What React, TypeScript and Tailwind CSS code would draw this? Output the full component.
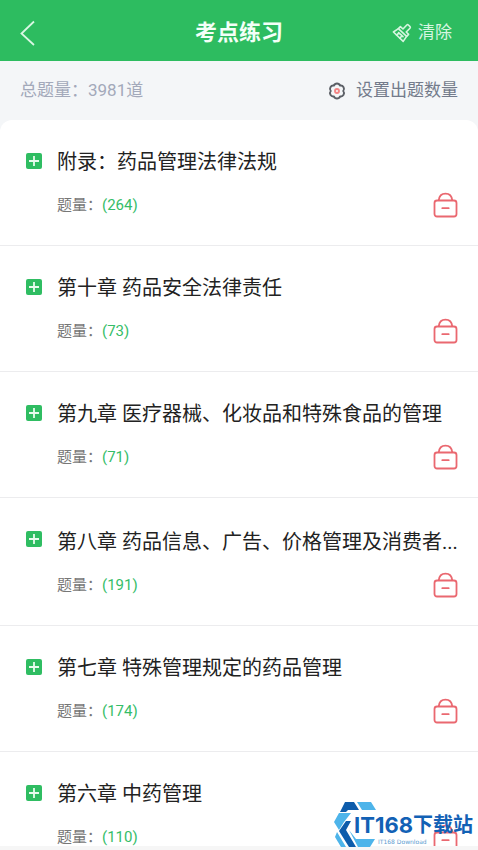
type Chapter = { title: string; count: number };

const chapters: Chapter[] = [
  { title: "附录：药品管理法律法规", count: 264 },
  { title: "第十章 药品安全法律责任", count: 73 },
  { title: "第九章 医疗器械、化妆品和特殊食品的管理", count: 71 },
  { title: "第八章 药品信息、广告、价格管理及消费者...", count: 191 },
  { title: "第七章 特殊管理规定的药品管理", count: 174 },
  { title: "第六章 中药管理", count: 110 },
];

function BackIcon() {
  return (
    <svg width="16" height="26" viewBox="0 0 16 26" fill="none" stroke="#d9f7e3" strokeWidth="1.8">
      <path d="M14 1.5 1.5 13.5 14 25" />
    </svg>
  );
}

function BrushIcon() {
  return (
    <svg width="20" height="20" viewBox="0 0 20 20" fill="none" stroke="#d6f5e0" strokeWidth="1.6" strokeLinejoin="round" strokeLinecap="round">
      <path d="M8.4 3.6 11 6 14.8 2Q15.6 1.3 16.4 2L18 3.6Q18.7 4.4 18 5.2L14.2 9 16.6 11.4 14.6 13.4 6.4 5.6Z" />
      <path d="M6.4 5.6 1.4 9 11.2 18.4 14.6 13.4" />
      <path d="M4.6 12 7 9.8M7.8 15.2 10 12.8M6.6 9.6 11 13.6" />
    </svg>
  );
}

function GearIcon() {
  return (
    <svg width="18" height="18" viewBox="0 0 18 18" fill="none" strokeWidth="1.9" strokeLinejoin="round">
      <path
        stroke="#5b5f66"
        d="M12.1 3.6A3.3 3.3 0 0 1 15.2 9A3.3 3.3 0 0 1 12.1 14.4A3.3 3.3 0 0 1 5.9 14.4A3.3 3.3 0 0 1 2.8 9A3.3 3.3 0 0 1 5.9 3.6A3.3 3.3 0 0 1 12.1 3.6Z"
      />
      <circle cx="9" cy="9" r="2" stroke="#f28585" />
    </svg>
  );
}

function PlusIcon() {
  return (
    <svg width="16" height="16" viewBox="0 0 16 16" fill="none">
      <rect width="16" height="16" rx="2" fill="#2fbd62" />
      <path d="M8 3v10M3 8h10" stroke="#e9fbef" strokeWidth="1.8" />
    </svg>
  );
}

function LockIcon() {
  return (
    <svg width="25" height="26" viewBox="0 0 25 26" fill="none" stroke="#ea6870" strokeWidth="1.8" strokeLinecap="round">
      <rect x="1.5" y="8.5" width="22" height="16" rx="2.5" />
      <path d="M5.8 8.2C6.2 4 9 1.6 12.5 1.6S18.8 4 19.2 8.2M9.3 16.2h6.4" />
    </svg>
  );
}

function ChapterRow({ title, count }: Chapter) {
  // shortened titles sit slightly lower in their row
  const short = title.endsWith("...");
  return (
    <li className={`flex border-b border-[#ececee] pb-6 pl-[26px] pr-5 ${short ? "pt-[29px]" : "pt-[27px]"}`}>
      <button type="button" aria-label="展开" className={`h-4 w-4 shrink-0 ${short ? "mt-1" : "mt-[6px]"}`}>
        <PlusIcon />
      </button>
      <div className="ml-[15px] min-w-0 flex-1">
        <h2 className="whitespace-nowrap text-[20px] leading-[30px] text-[#222222]">{title}</h2>
        <div className="mt-3 flex h-8 items-center justify-between">
          <p className="text-[15px] leading-[20px] text-[#777777]">
            题量：<span className="text-[#35bd68]">({count})</span>
          </p>
          <button type="button" aria-label="解锁">
            <LockIcon />
          </button>
        </div>
      </div>
    </li>
  );
}

function Watermark() {
  return (
    <div className="pointer-events-none absolute bottom-[2px] right-[5px] flex items-end">
      <svg width="48" height="46" viewBox="0 0 48 46" className="-mr-7">
        <path d="M11 0H20L25 8H14L12 10H6Z" fill="#0d5cab" />
        <path d="M23 0H37L42 8H28Z" fill="#4db4ea" />
        <path d="M5 11H17L10 20 5 28 0 20Z" fill="#4db4ea" />
        <path d="M12 19H17L12 28 22 45H15L5 29Z" fill="#0d5cab" />
        <path d="M3 30 12 45H7L1 35Z" fill="#4db4ea" />
        <path d="M15 28 22 37H41L36 45H24Z" fill="#4db4ea" />
      </svg>
      <div className="relative text-[#1261b5]">
        <p className="flex items-center font-['Inter','Noto_Sans_CJK_SC',sans-serif] text-[22px] font-bold leading-[22px]">
          IT168<span className="text-[20px]">下载站</span>
        </p>
        <p className="ml-6 font-['DejaVu_Sans',sans-serif] text-[6px] leading-[12px] text-[#5d9bd0]">IT168 Download</p>
      </div>
    </div>
  );
}

export default function App() {
  return (
    <div className="relative flex h-screen flex-col overflow-hidden bg-[#f4f6f8] font-['Roboto','Noto_Sans_CJK_SC',sans-serif]">
      <header className="grid h-[61px] shrink-0 grid-cols-3 items-center bg-[#2dbc60] px-5 pt-1">
        <button type="button" aria-label="返回" className="justify-self-start">
          <BackIcon />
        </button>
        <h1 className="justify-self-center whitespace-nowrap text-[22px] font-bold leading-[30px] text-[#f3fff7]">考点练习</h1>
        <button type="button" className="flex items-center gap-[6px] justify-self-end pr-[6px] text-[17px] text-[#d6f5e0]">
          <BrushIcon />
          清除
        </button>
      </header>

      <div className="flex h-[59px] shrink-0 items-center justify-between px-5">
        <p className="text-[17px] text-[#a3a9ba]">总题量：3981道</p>
        <button type="button" className="flex items-center gap-[10px] text-[17px] text-[#737b8b]">
          <GearIcon />
          设置出题数量
        </button>
      </div>

      <main className="min-h-0 flex-1 overflow-hidden rounded-t-xl bg-white">
        <ul>
          {chapters.map((c) => (
            <ChapterRow key={c.title} {...c} />
          ))}
        </ul>
      </main>
      <div className="h-1 shrink-0 bg-[#f6f6f6]" />

      <Watermark />
    </div>
  );
}
